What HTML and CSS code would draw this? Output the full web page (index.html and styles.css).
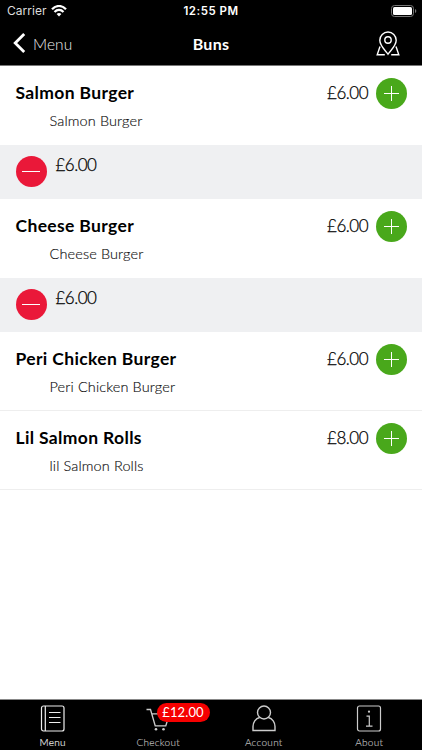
FILE: index.html
```
<!DOCTYPE html>
<html lang="en">
<head>
<meta charset="utf-8">
<title>Buns</title>
<link rel="stylesheet" href="styles.css">
</head>
<body>
<div class="app">
  <header class="top">
    <div class="status">
      <div class="carrier"><span>Carrier</span>
        <svg width="16" height="12" viewBox="0 0 16 12" fill="none" stroke="#fff" stroke-width="2.200"><path d="M1 4.200C5-.1 11-.1 15 4.200M3.500 6.900c2.600-2.700 6.400-2.700 9 0"/><path d="M5.600 8.900c1.500-1.300 3.300-1.300 4.800 0L8 11.500z" fill="#fff" stroke="none"/></svg>
      </div>
      <div class="clock">12:55 PM</div>
      <svg class="battery" width="26" height="12" viewBox="0 0 26 12"><rect x=".5" y=".5" width="22" height="11" rx="3" fill="none" stroke="#777"/><rect x="2" y="2" width="19" height="8" rx="1.500" fill="#fff"/><path d="M24 4v4q1.300-.5 1.300-2T24 4z" fill="#777"/></svg>
    </div>
    <nav class="nav">
      <a class="back"><svg width="13" height="20" viewBox="0 0 13 20" fill="none" stroke="#fff" stroke-width="2.800"><path d="M11.200 1 2.200 10l9 9"/></svg><span>Menu</span></a>
      <h1>Buns</h1>
      <svg class="pin" width="24" height="26" viewBox="0 0 24 26" fill="none" stroke="#fff" stroke-width="1.400"><path d="M12 23.200C9 19 3.800 14.600 3.800 9.200a8.200 8.200 0 0 1 16.400 0c0 5.400-5.200 9.800-8.200 14z"/><circle cx="12" cy="9" r="3.200"/><path d="M4 15.500 1.200 23.700h7.600M20 15.500l2.800 8.200h-7.600"/></svg>
    </nav>
  </header>
  <main>
    <section class="item">
      <div class="name">Salmon Burger</div><div class="price">£6.00</div>
      <button class="round add" aria-label="Add"></button>
      <div class="desc">Salmon Burger</div>
    </section>
    <section class="line"><button class="round remove" aria-label="Remove"></button><div class="price">£6.00</div></section>
    <section class="item">
      <div class="name">Cheese Burger</div><div class="price">£6.00</div>
      <button class="round add" aria-label="Add"></button>
      <div class="desc">Cheese Burger</div>
    </section>
    <section class="line"><button class="round remove" aria-label="Remove"></button><div class="price">£6.00</div></section>
    <section class="item ruled">
      <div class="name">Peri Chicken Burger</div><div class="price">£6.00</div>
      <button class="round add" aria-label="Add"></button>
      <div class="desc">Peri Chicken Burger</div>
    </section>
    <section class="item ruled">
      <div class="name">Lil Salmon Rolls</div><div class="price">£8.00</div>
      <button class="round add" aria-label="Add"></button>
      <div class="desc">lil Salmon Rolls</div>
    </section>
  </main>
  <footer class="tabs">
    <div class="tab active">
      <svg width="26" height="28" viewBox="0 0 26 28" fill="none" stroke="currentColor" stroke-width="1.200"><rect x="1.500" y="1" width="22.500" height="25" rx="2"/><path d="M5.300 1v25M9 7.500h11.500M9 12.500h11.500M9 17.500h11.500"/></svg>
      <span>Menu</span>
    </div>
    <div class="tab">
      <svg width="26" height="28" viewBox="0 0 26 28" fill="none" stroke="currentColor" stroke-width="1.300"><path d="M1.500 4.500h4l4.700 16.300h10.600l3.700-12H6.800"/><circle cx="11" cy="24.300" r="1.300" fill="currentColor" stroke="none"/><circle cx="18.500" cy="24.300" r="1.300" fill="currentColor" stroke="none"/></svg>
      <span>Checkout</span><b class="badge">£12.00</b>
    </div>
    <div class="tab">
      <svg width="26" height="28" viewBox="0 0 26 28" fill="none" stroke="currentColor" stroke-width="1.400"><circle cx="13" cy="7.500" r="6.500"/><path d="M8.700 12.500C4.500 13.500 2 17.500 2 21.500v4h22v-4c0-4-2.500-8-6.700-9"/></svg>
      <span>Account</span>
    </div>
    <div class="tab">
      <svg width="26" height="28" viewBox="0 0 26 28" fill="none" stroke="currentColor" stroke-width="1.200"><rect x="1.500" y="1" width="23" height="25" rx="2"/><path d="M10.500 11.200h2.800v10M10 21.200h6.500"/><circle cx="13" cy="6.700" r="1.100" fill="currentColor" stroke="none"/></svg>
      <span>About</span>
    </div>
  </footer>
</div>
</body>
</html>
```
FILE: styles.css
```
* { box-sizing: border-box; }
body { margin: 0; font-family: Lato, sans-serif; color: #000; background: #fff; }
.app { width: 422px; height: 750px; display: flex; flex-direction: column; overflow: hidden; }
.top { height: 66px; flex: none; background: #000; border-bottom: 1px solid #777; color: #fff; }
.status { height: 22px; display: grid; grid-template-columns: 1fr auto 1fr; align-items: center; padding: 0 6px; font: 12px/22px Inter, sans-serif; }
.carrier { display: flex; align-items: center; gap: 4px; padding-left: 1px; letter-spacing: .05px; color: #ddd; }
.clock { font-weight: 600; font-size: 11.500px; letter-spacing: .5px; }
.battery { justify-self: end; margin-right: -1px; }
.nav { height: 43px; display: grid; grid-template-columns: 1fr auto 1fr; align-items: center; padding: 0 22px; }
.back { display: flex; align-items: center; gap: 7px; margin-left: -9px; font-size: 15.500px; color: #eee; }
.back svg { margin-top: -2px; }
.back span { font-weight: 300; letter-spacing: .1px; }
.nav h1 { margin: 0; font-size: 16px; line-height: 20px; font-weight: 700; letter-spacing: .3px; }
.pin { justify-self: end; }
main { flex: 1; }
.item { height: 78.700px; padding: 11.700px 15.500px 0; display: grid; grid-template-columns: 1fr auto 31px; grid-template-rows: 31px 1fr; column-gap: 8px; align-items: center; }
.item.ruled { height: 79px; border-bottom: 1px solid #eee; }
.name { font-size: 17.500px; line-height: 24px; font-weight: 700; letter-spacing: .35px; white-space: nowrap; }
.desc { grid-column: 1 / -1; align-self: start; padding: 2.500px 0 0 34px; font-size: 14.500px; line-height: 19px; font-weight: 300; letter-spacing: .12px; color: #111; -webkit-text-stroke: .15px #111; white-space: nowrap; }
.price { font-size: 17px; line-height: 24px; font-weight: 300; letter-spacing: -.5px; margin-right: -.5px; -webkit-text-stroke: .25px #000; }
.line { height: 54.300px; background: #eff0f2; padding: 11px 15.500px; display: flex; gap: 9px; }
.line .price { margin-top: -3px; }
.round { width: 31px; height: 31px; border: 0; padding: 0; border-radius: 50%; display: grid; place-items: center; }
.round::before, .round::after { content: ""; grid-area: 1 / 1; background: #fff; }
.add { background: #49a81b; }
.add::before { width: 15px; height: 1px; }
.add::after { width: 1px; height: 15px; }
.remove { background: #ea1839; }
.remove::before { width: 18px; height: 1px; }
.remove::after { display: none; }
.tabs { height: 51px; flex: none; background: #000; border-top: 1px solid #888; display: grid; grid-template-columns: repeat(4, 1fr); }
.tab { position: relative; display: flex; flex-direction: column; align-items: center; padding-top: 5px; color: #bbb; font-size: 10px; line-height: 14px; }
.tab svg { color: #ccc; }
.tab span { margin-top: 2px; letter-spacing: .3px; font-weight: 300; -webkit-text-stroke: .15px #bbb; }
.tab.active, .active svg { color: #eee; }
.active span { -webkit-text-stroke-color: #eee; }
.badge { position: absolute; left: 51px; top: 3px; height: 19px; width: 53px; border-radius: 10px; background: #f60000; color: #fff; text-align: center; font-size: 13px; line-height: 19px; font-weight: 400; letter-spacing: .1px; }
```
